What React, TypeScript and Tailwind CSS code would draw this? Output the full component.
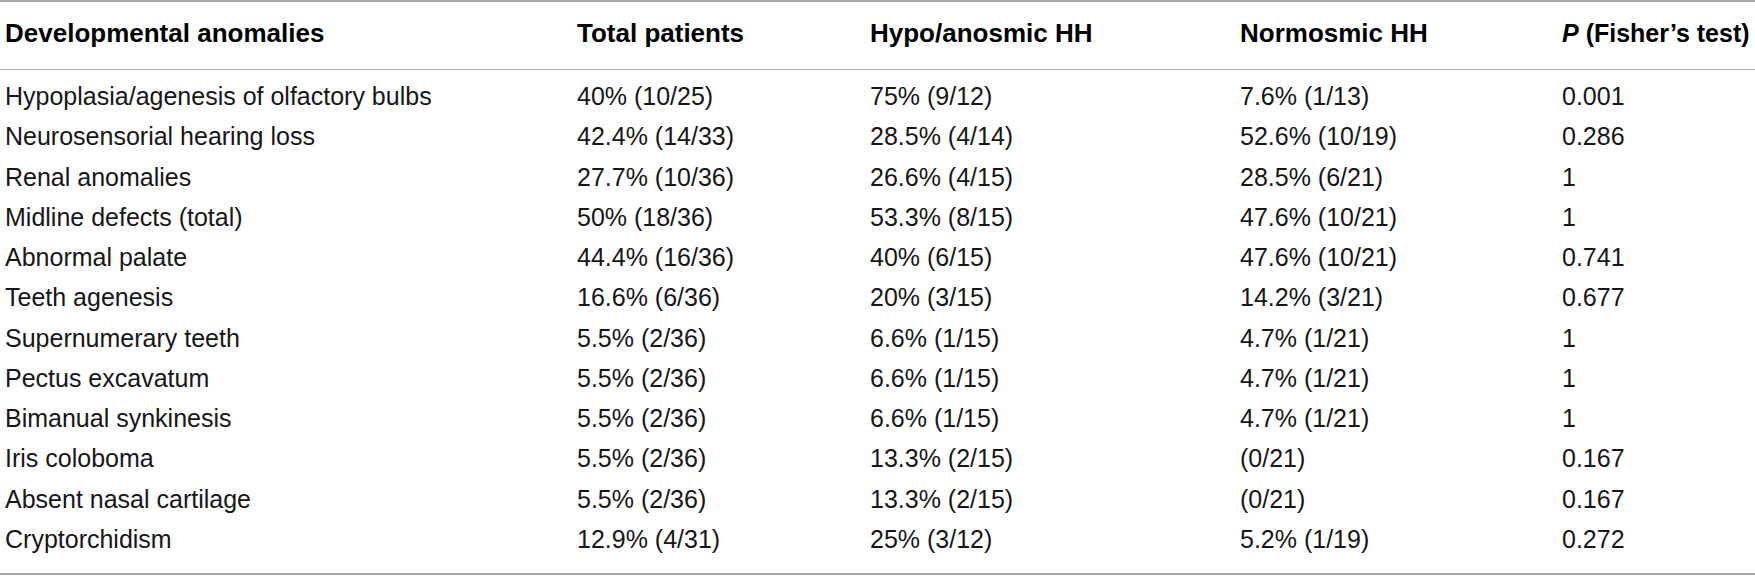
const rows: [string, string, string, string, string][] = [
  ["Hypoplasia/agenesis of olfactory bulbs", "40% (10/25)", "75% (9/12)", "7.6% (1/13)", "0.001"],
  ["Neurosensorial hearing loss", "42.4% (14/33)", "28.5% (4/14)", "52.6% (10/19)", "0.286"],
  ["Renal anomalies", "27.7% (10/36)", "26.6% (4/15)", "28.5% (6/21)", "1"],
  ["Midline defects (total)", "50% (18/36)", "53.3% (8/15)", "47.6% (10/21)", "1"],
  ["Abnormal palate", "44.4% (16/36)", "40% (6/15)", "47.6% (10/21)", "0.741"],
  ["Teeth agenesis", "16.6% (6/36)", "20% (3/15)", "14.2% (3/21)", "0.677"],
  ["Supernumerary teeth", "5.5% (2/36)", "6.6% (1/15)", "4.7% (1/21)", "1"],
  ["Pectus excavatum", "5.5% (2/36)", "6.6% (1/15)", "4.7% (1/21)", "1"],
  ["Bimanual synkinesis", "5.5% (2/36)", "6.6% (1/15)", "4.7% (1/21)", "1"],
  ["Iris coloboma", "5.5% (2/36)", "13.3% (2/15)", "(0/21)", "0.167"],
  ["Absent nasal cartilage", "5.5% (2/36)", "13.3% (2/15)", "(0/21)", "0.167"],
  ["Cryptorchidism", "12.9% (4/31)", "25% (3/12)", "5.2% (1/19)", "0.272"],
];

const cols = "grid grid-cols-[572px_293px_370px_322px_1fr] pl-[5px]";

export default function App() {
  return (
    <div className="w-[1755px] h-[576px] bg-white text-[#161616] font-['Liberation_Sans',Arial,sans-serif] text-[25px] overflow-hidden">
      {/* header */}
      <div className={`${cols} border-t-2 border-b border-[#a9a9a9] pt-[11px] pb-[16px] text-[26px] font-bold leading-[40px] text-black whitespace-nowrap`}>
        <div>Developmental anomalies</div>
        <div>Total patients</div>
        <div>Hypo/anosmic HH</div>
        <div>Normosmic HH</div>
        <div className="text-[25px]">
          <i>P</i> (Fisher’s test)
        </div>
      </div>

      {/* body */}
      <div className="pt-[6px] pb-[14px] border-b-2 border-[#a9a9a9]">
        {rows.map((r) => (
          <div key={r[0]} className={`${cols} leading-[40.25px] whitespace-nowrap`}>
            {r.map((cell, i) => (
              <div key={i}>{cell}</div>
            ))}
          </div>
        ))}
      </div>
    </div>
  );
}
